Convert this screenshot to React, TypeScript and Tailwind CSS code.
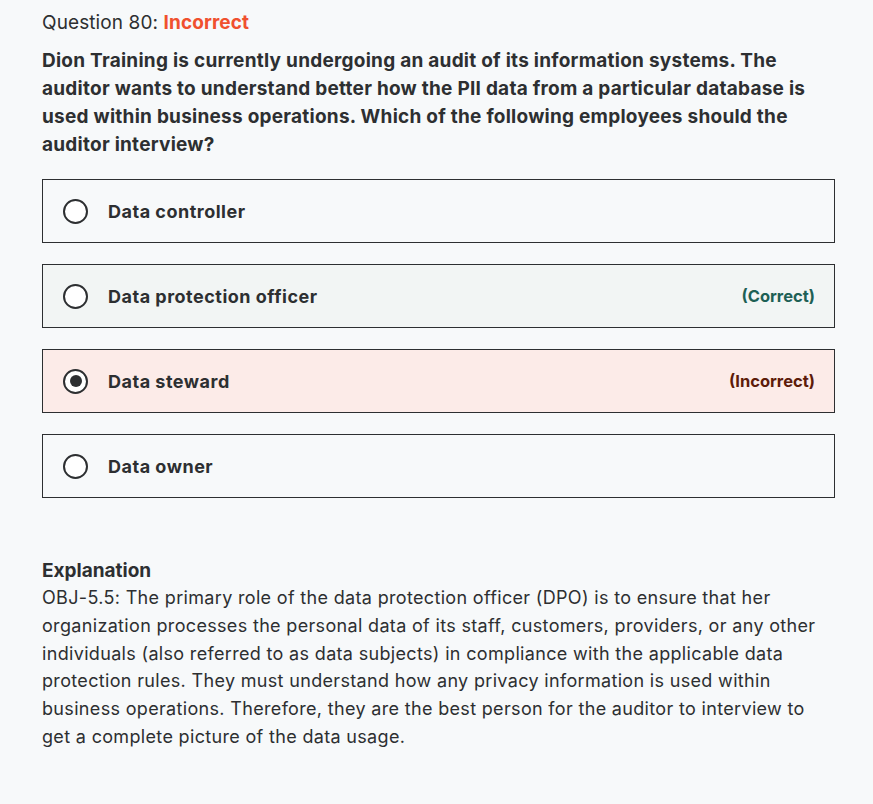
const options = [
  { label: "Data controller", state: "none", checked: false },
  { label: "Data protection officer", state: "correct", checked: false },
  { label: "Data steward", state: "incorrect", checked: true },
  { label: "Data owner", state: "none", checked: false },
];

const questionLines = [
  "Dion Training is currently undergoing an audit of its information systems. The",
  "auditor wants to understand better how the PII data from a particular database is",
  "used within business operations. Which of the following employees should the",
  "auditor interview?",
];

const explanationLines = [
  "OBJ-5.5: The primary role of the data protection officer (DPO) is to ensure that her",
  "organization processes the personal data of its staff, customers, providers, or any other",
  "individuals (also referred to as data subjects) in compliance with the applicable data",
  "protection rules. They must understand how any privacy information is used within",
  "business operations. Therefore, they are the best person for the auditor to interview to",
  "get a complete picture of the data usage.",
];

function Radio({ checked }: { checked: boolean }) {
  return (
    <span className="flex h-[25px] w-[25px] shrink-0 items-center justify-center rounded-full border-2 border-[#2d2f31] bg-white">
      {checked && <span className="h-[12px] w-[12px] rounded-full bg-[#2d2f31]" />}
    </span>
  );
}

export default function App() {
  return (
    <div className="min-h-[804px] bg-[#f7f9fa] font-['Inter','Liberation_Sans',sans-serif] text-[#2d2f31]">
      <div className="w-[835px] pl-[42px] pt-[9px]">
        <div className="text-[19px] leading-[28px] tracking-[0.1px]">
          Question 80: <span className="font-bold text-[#f0502e]">Incorrect</span>
        </div>

        <p className="mt-[10px] text-[19px] font-bold leading-[28px] tracking-[0.25px] whitespace-nowrap">
          {questionLines.map((line) => (
            <span key={line} className="block">
              {line}
            </span>
          ))}
        </p>

        {/* answer choices */}
        <div className="mt-[20px] flex flex-col gap-[21px]">
          {options.map((opt) => (
            <div
              key={opt.label}
              className={`flex h-[64px] items-center border border-[#2d2f31] pl-[20px] pr-[19px] ${
                opt.state === "correct"
                  ? "bg-[#f2f5f4]"
                  : opt.state === "incorrect"
                  ? "bg-[#fcebe8]"
                  : "bg-[#f7f9fa]"
              }`}
            >
              <Radio checked={opt.checked} />
              <span className="ml-[20px] text-[18px] font-bold tracking-[0.5px]">{opt.label}</span>
              {opt.state === "correct" && (
                <span className="ml-auto text-[16.5px] font-bold text-[#1e6055]">(Correct)</span>
              )}
              {opt.state === "incorrect" && (
                <span className="ml-auto text-[16.5px] font-bold text-[#5d1b0a]">(Incorrect)</span>
              )}
            </div>
          ))}
        </div>

        <div className="mt-[59px]">
          <div className="text-[19px] font-bold leading-[28px]">Explanation</div>
          <p className="mt-[-1px] text-[18px] leading-[27.8px] tracking-[0.33px] whitespace-nowrap">
            {explanationLines.map((line) => (
              <span key={line} className="block">
                {line}
              </span>
            ))}
          </p>
        </div>
      </div>
    </div>
  );
}
